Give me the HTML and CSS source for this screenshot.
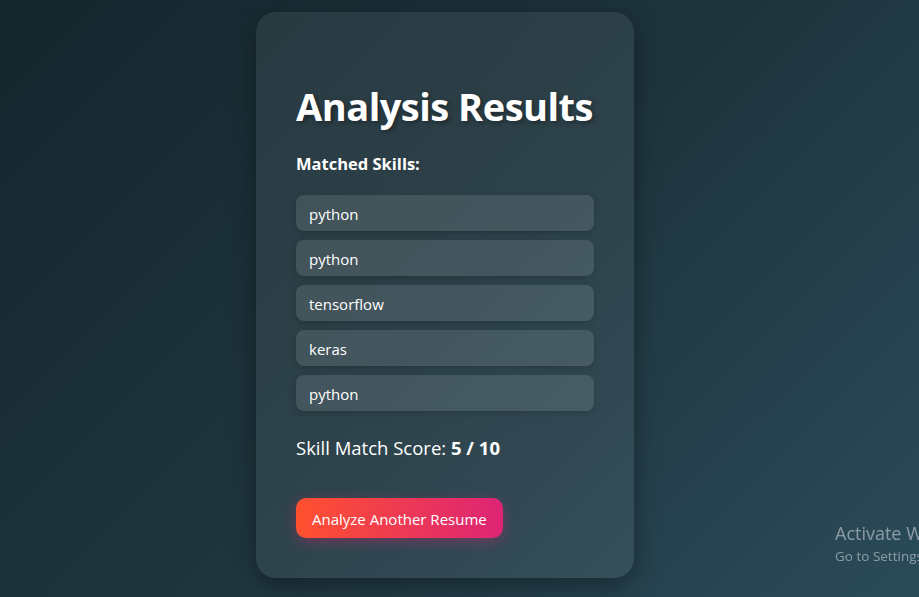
FILE: index.html
```html
<!DOCTYPE html>
<html lang="en">
<head>
<meta charset="utf-8">
<title>Analysis Results</title>
<link rel="stylesheet" href="styles.css">
</head>
<body>
<main class="page">
  <section class="card">
    <h1 class="title">Analysis Results</h1>
    <h3 class="subtitle">Matched Skills:</h3>
    <ul class="skills">
      <li class="skill">python</li>
      <li class="skill">python</li>
      <li class="skill">tensorflow</li>
      <li class="skill">keras</li>
      <li class="skill">python</li>
    </ul>
    <p class="score">Skill Match Score: <strong>5 / 10</strong></p>
    <a class="btn" href="#">Analyze Another Resume</a>
  </section>
</main>
<div class="watermark">
  <div class="wm-title">Activate Windows</div>
  <div class="wm-sub">Go to Settings to activate Windows.</div>
</div>
</body>
</html>
```
FILE: styles.css
```css
* { box-sizing: border-box; }
html, body { margin: 0; padding: 0; }
body {
  height: 597px;
  overflow: hidden;
  font-family: "Open Sans", "Noto Sans", sans-serif;
  color: #fff;
  background: linear-gradient(135deg, #15262d 0%, #1e343d 50%, #2b4b5a 100%);
}
.page {
  display: flex;
  padding: 12px 0 0 256px;
}
.card {
  width: 378px;
  height: 566px;
  padding: 40px;
  border-radius: 20px;
  background: rgba(255,255,255,0.07);
  box-shadow: 0 8px 24px rgba(0,0,0,0.35);
  display: flex;
  flex-direction: column;
}
.title {
  margin: 30px 0 0;
  font-size: 38px;
  line-height: 48px;
  font-weight: 700;
  letter-spacing: -0.5px;
  text-shadow: 2px 2px 4px rgba(0,0,0,0.35);
}
.subtitle {
  margin: 22px 0 0;
  font-size: 16.5px;
  line-height: 24px;
  font-weight: 700;
}
.skills {
  list-style: none;
  margin: 19px 0 0;
  padding: 0;
  display: flex;
  flex-direction: column;
  gap: 9px;
}
.skill {
  height: 36px;
  display: flex;
  align-items: center;
  padding: 1px 13px 0;
  border-radius: 8px;
  background: rgba(255,255,255,0.11);
  box-shadow: 0 2px 6px rgba(0,0,0,0.18);
  font-size: 15px;
}
.score {
  margin: 24px 0 0;
  font-size: 18.5px;
  line-height: 26px;
}
.score strong { font-weight: 700; }
.btn {
  align-self: flex-start;
  margin-top: 37px;
  height: 40px;
  display: flex;
  align-items: center;
  padding: 1px 16px 0;
  border-radius: 10px;
  background: linear-gradient(90deg, #ff512f, #dd2476);
  color: #fff;
  text-decoration: none;
  font-size: 15px;
  box-shadow: 0 4px 14px rgba(221,36,118,0.35);
}
.watermark {
  position: fixed;
  left: 835px;
  top: 522px;
  color: rgba(255,255,255,0.45);
  font-family: "Open Sans", "Noto Sans", sans-serif;
  white-space: nowrap;
}
.wm-title { font-size: 18px; line-height: 22px; }
.wm-sub { font-size: 13.5px; line-height: 18px; margin-top: 3px; }
```
